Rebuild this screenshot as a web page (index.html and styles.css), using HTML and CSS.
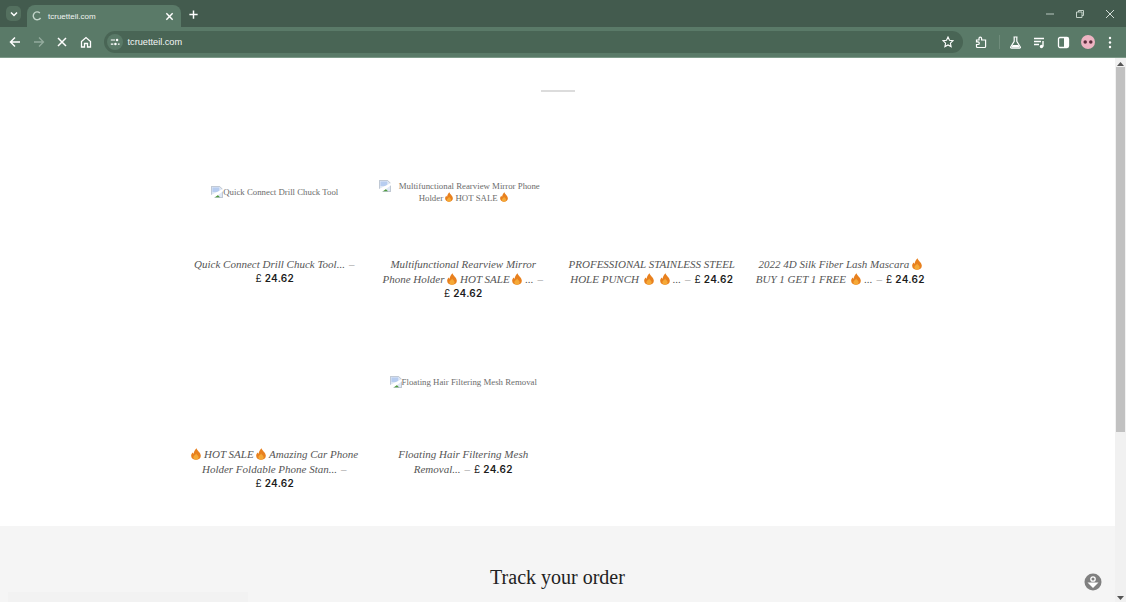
FILE: index.html
```html
<!DOCTYPE html>
<html lang="en">
<head>
<meta charset="utf-8">
<title>tcruetteil.com</title>
<link rel="stylesheet" href="styles.css">
</head>
<body>
<svg class="defs" width="0" height="0" aria-hidden="true">
  <defs>
    <symbol id="fire" viewBox="0 0 12 14">
      <path fill="#e8801e" d="M6.800 0C7 3 11.800 5 11.800 9.200 11.800 12.200 9.300 14 6 14 2.700 14 .2 12.200 .2 9.200 .2 7.500 1 6.200 2 5.200 2.300 6 2.600 6.500 3.200 6.800 3.200 4 5 1.500 6.800 0z"/>
      <path fill="#f5a937" d="M6.200 6.500C6.600 8 9.200 9 9.200 11 9.200 12.800 7.800 14 6 14S2.800 12.800 2.800 11C2.800 9.200 5.800 8.200 6.200 6.500z"/>
    </symbol>
    <symbol id="broken" viewBox="0 0 16 16">
      <path fill="#dfe8f5" stroke="#a9b4c2" d="M.5.5h11l4 4v11H.5z"/>
      <path fill="#b7cdf0" d="M2 2h9v6H2z"/>
      <path fill="#4f9a3c" d="M1 15l5-5 4 3 2 2z"/>
      <path fill="#fff" d="M0 12 16 4v3L4 16H0z"/>
    </symbol>
  </defs>
</svg>
<div class="window">
  <header class="chrome">
    <div class="tabstrip">
      <div class="tab-search">
        <svg width="10" height="10" viewBox="0 0 10 10"><path d="M2 3.500 5 6.500 8 3.500" fill="none" stroke="#fff" stroke-width="1.500"/></svg>
      </div>
      <div class="tab">
        <svg class="spinner" width="10" height="10" viewBox="0 0 14 14"><path d="M11 2.700A5.500 5.500 0 1 0 12 9.500" fill="none" stroke="#c4d6cb" stroke-width="2"/></svg>
        <span class="tab-title">tcruetteil.com</span>
        <svg width="9" height="9" viewBox="0 0 10 10"><path d="M1.500 1.500l7 7m0-7l-7 7" stroke="#fff" stroke-width="1.600"/></svg>
      </div>
      <svg class="newtab" width="11" height="11" viewBox="0 0 12 12"><path d="M6 1.500v9M1.500 6h9" stroke="#fff" stroke-width="1.600"/></svg>
      <div class="winctl">
        <svg width="10" height="10" viewBox="0 0 10 10"><path d="M1 5h8" stroke="#b9c8bf"/></svg>
        <svg width="10" height="10" viewBox="0 0 10 10"><path d="M1.500 3h5.500v5.500H1.500zM3.500 3V1.500H8.500V6.500H7" fill="none" stroke="#c4d2c9"/></svg>
        <svg width="10" height="10" viewBox="0 0 10 10"><path d="M1 1l8 8m0-8l-8 8" stroke="#d3ddd7"/></svg>
      </div>
    </div>
    <div class="toolbar">
      <div class="nav">
        <svg width="12" height="12" viewBox="0 0 12 12"><path d="M11 6H2M6 1.500 1.500 6 6 10.500" fill="none" stroke="#fff" stroke-width="1.500"/></svg>
        <svg width="12" height="12" viewBox="0 0 12 12"><path d="M1 6h9M6 1.500 10.500 6 6 10.500" fill="none" stroke="#93ab9d" stroke-width="1.300"/></svg>
        <svg width="12" height="12" viewBox="0 0 12 12"><path d="M2 2l8 8m0-8l-8 8" stroke="#fff" stroke-width="1.500"/></svg>
        <svg width="12" height="12" viewBox="0 0 12 12"><path d="M1.500 5.500 6 1.500l4.500 4v5.500H7.500V7.500h-3V11H1.500z" fill="none" stroke="#fff" stroke-width="1.300"/></svg>
      </div>
      <div class="omnibox">
        <span class="site-info">
          <svg width="10" height="10" viewBox="0 0 12 12"><path d="M1 3.500h5M1 8.500h3M9.500 8.500h2" stroke="#fff" stroke-width="1.300"/><circle cx="8.500" cy="3.500" r="1.500" fill="#fff"/><circle cx="6.500" cy="8.500" r="1.500" fill="#fff"/></svg>
        </span>
        <span class="url">tcruetteil.com</span>
        <svg class="star" width="12" height="12" viewBox="0 0 12 12"><path d="M6 1l1.500 3.300 3.500.4-2.600 2.400.7 3.500L6 8.900l-3.100 1.700.7-3.500L1 4.700l3.500-.4z" fill="none" stroke="#fff" stroke-width="1.100"/></svg>
      </div>
      <div class="tools">
        <svg class="ext" width="13" height="13" viewBox="0 0 13 13"><path d="M1.500 4h2.500V2.500a1.300 1.300 0 0 1 2.600 0V4h4v6.500a1 1 0 0 1-1 1H2.500a1 1 0 0 1-1-1V8.500H3a1.300 1.300 0 0 0 0-2.600H1.500z" fill="none" stroke="#fff" stroke-width="1.200"/></svg>
        <span class="sep"></span>
        <svg width="13" height="13" viewBox="0 0 13 13"><path d="M4.500 1h4M5.200 1v4.300L1.700 11a.8.800 0 0 0 .7 1.200h8.200a.8.800 0 0 0 .7-1.200L7.800 5.300V1" fill="none" stroke="#fff" stroke-width="1.200"/><path d="M3.500 9h6l1 2.500h-8z" fill="#fff"/></svg>
        <svg width="13" height="13" viewBox="0 0 13 13"><path d="M1 2.500h10M1 5.500h7M1 8.500h5" stroke="#fff" stroke-width="1.300"/><path d="M10 5v5.500" stroke="#fff" stroke-width="1.400"/><circle cx="8.500" cy="10.500" r="1.700" fill="#fff"/></svg>
        <svg width="13" height="13" viewBox="0 0 13 13"><rect x="1.500" y="1.500" width="10" height="10" rx="1.500" fill="none" stroke="#fff" stroke-width="1.300"/><path d="M7 2h4v9H7z" fill="#fff"/></svg>
        <svg class="avatar" width="14" height="14" viewBox="0 0 16 16"><circle cx="8" cy="8" r="8" fill="#eeb4c3"/><circle cx="4.800" cy="8" r="2" fill="#5b2b3b"/><circle cx="11.200" cy="8" r="2" fill="#5b2b3b"/></svg>
        <svg class="dots" width="4" height="13" viewBox="0 0 4 13"><circle cx="2" cy="2" r="1.200" fill="#fff"/><circle cx="2" cy="6.500" r="1.200" fill="#fff"/><circle cx="2" cy="11" r="1.200" fill="#fff"/></svg>
      </div>
    </div>
  </header>

  <div class="viewport">
    <main class="page">
      <section class="collection">
        <div class="rule"></div>
        <div class="grid">
          <article class="card">
            <div class="thumb"><span class="alt"><svg class="broken"><use href="#broken"/></svg>Quick Connect Drill Chuck Tool</span></div>
            <p class="info"><em class="name">Quick Connect Drill Chuck Tool...</em> <span class="dash">–</span> <span class="price"><span class="cur">£</span> 24.62</span></p>
          </article>
          <article class="card">
            <div class="thumb"><span class="alt"><svg class="broken gap"><use href="#broken"/></svg>Multifunctional Rearview Mirror Phone Holder <svg class="fire"><use href="#fire"/></svg> HOT SALE <svg class="fire"><use href="#fire"/></svg></span></div>
            <p class="info"><em class="name">Multifunctional Rearview Mirror Phone Holder <svg class="fire"><use href="#fire"/></svg> HOT SALE <svg class="fire"><use href="#fire"/></svg> ...</em> <span class="dash">–</span> <span class="price"><span class="cur">£</span> 24.62</span></p>
          </article>
          <article class="card">
            <div class="thumb"></div>
            <p class="info"><em class="name">PROFESSIONAL STAINLESS STEEL HOLE PUNCH &nbsp;<svg class="fire"><use href="#fire"/></svg> &nbsp;<svg class="fire"><use href="#fire"/></svg> ...</em> <span class="dash">–</span> <span class="price"><span class="cur">£</span> 24.62</span></p>
          </article>
          <article class="card">
            <div class="thumb"></div>
            <p class="info"><em class="name">2022 4D Silk Fiber Lash Mascara <svg class="fire"><use href="#fire"/></svg> BUY 1 GET 1 FREE &nbsp;<svg class="fire"><use href="#fire"/></svg> ...</em> <span class="dash">–</span> <span class="price"><span class="cur">£</span> 24.62</span></p>
          </article>
          <article class="card">
            <div class="thumb"></div>
            <p class="info"><em class="name"><svg class="fire"><use href="#fire"/></svg> HOT SALE <svg class="fire"><use href="#fire"/></svg> Amazing Car Phone Holder Foldable Phone Stan...</em> <span class="dash">–</span> <span class="price"><span class="cur">£</span> 24.62</span></p>
          </article>
          <article class="card">
            <div class="thumb"><span class="alt"><svg class="broken"><use href="#broken"/></svg>Floating Hair Filtering Mesh Removal</span></div>
            <p class="info"><em class="name">Floating Hair Filtering Mesh Removal...</em> <span class="dash">–</span> <span class="price"><span class="cur">£</span> 24.62</span></p>
          </article>
        </div>
      </section>
      <footer class="track">
        <h2 class="track-title">Track your order</h2>
      </footer>
      <div class="faint-bar"></div>
      <button class="widget" aria-label="Help">
        <svg width="18" height="18" viewBox="0 0 18 18"><circle cx="9" cy="9" r="8.500" fill="#808080"/><circle cx="9" cy="6" r="2.200" fill="none" stroke="#fff" stroke-width="1.300"/><path d="M3.500 9.500h11L9 15z" fill="#fff"/></svg>
      </button>
    </main>
    <div class="scrollbar">
      <svg class="arrow" width="7" height="4" viewBox="0 0 7 4"><path d="M3.500 0 7 4H0z" fill="#555"/></svg>
      <div class="track-bar"><div class="thumb-bar"></div></div>
      <svg class="arrow" width="7" height="4" viewBox="0 0 7 4"><path d="M0 0h7L3.500 4z" fill="#555"/></svg>
    </div>
  </div>
</div>
</body>
</html>
```

FILE: styles.css
```css
* { box-sizing: border-box; }
html, body { margin: 0; height: 100%; overflow: hidden; background: #fff; }
.defs { position: absolute; }
.window { display: flex; flex-direction: column; height: 602px; font-family: "Liberation Sans", Arial, sans-serif; }

.chrome { flex: none; height: 58px; background: #5a7a68; border-bottom: 1px solid #7d9a89; display: flex; flex-direction: column; }
.tabstrip { flex: none; height: 27px; background: #435b4e; display: flex; align-items: center; padding: 5px 0 0 6px; }
.tab-search { width: 15px; height: 15px; margin-top: -5px; background: #54705f; border-radius: 5px; display: flex; align-items: center; justify-content: center; }
.tab { width: 154px; height: 22px; margin-left: 6px; background: #5a7a68; border-radius: 8px 8px 0 0; display: flex; align-items: center; gap: 6px; padding: 0 7px 0 5px; align-self: flex-end; }
.tab-title { flex: 1; font-size: 8px; color: #f0f4f1; }
.newtab { margin: -3px 0 0 7px; }
.winctl { margin: -5px 0 0 auto; display: flex; gap: 20px; padding-right: 11px; align-items: center; }

.toolbar { flex: 1; display: flex; align-items: center; padding: 0 9px 0 9px; }
.nav { display: flex; gap: 11.500px; align-items: center; }
.omnibox { width: 859px; height: 22px; margin-left: 12px; background: #496555; border-radius: 11px; display: flex; align-items: center; padding: 0 9px 0 3px; }
.site-info { width: 16px; height: 16px; border-radius: 8px; background: #5a7a68; display: flex; align-items: center; justify-content: center; }
.url { flex: 1; margin-left: 5px; font-size: 9.200px; color: #f4f7f5; }
.tools { display: flex; align-items: center; margin-left: 12px; gap: 11px; }
.sep { width: 1px; height: 14px; background: #6f8c7b; margin: 0 -2px 0 0; }
.dots { margin-left: 2px; }

.viewport { flex: 1; min-height: 0; display: flex; }
.page { flex: 1; min-width: 0; position: relative; overflow: hidden; background: #fff; }
.collection { height: 468px; display: flex; flex-direction: column; align-items: center; padding-top: 32px; }
.rule { width: 34px; height: 2px; background: #dcdcdc; flex: none; }
.grid { margin-top: 34px; display: grid; grid-template-columns: repeat(4, 170px); column-gap: 18.500px; row-gap: 16px; }
.card { text-align: center; min-width: 0; }
.thumb { height: 131px; display: flex; align-items: center; justify-content: center; }
.alt { font-family: "Liberation Serif", "Times New Roman", serif; font-size: 8.800px; line-height: 12px; color: #6c6c6c; display: block; }
.broken { display: inline-block; width: 12px; height: 12px; vertical-align: -3px; }
.broken.gap { margin: 0 8px 0 -8px; }
.fire { display: inline-block; width: 8px; height: 10px; vertical-align: -1px; }
.name .fire { width: 10px; height: 12px; vertical-align: -2px; }
.info { margin: 0; font-size: 11px; line-height: 13px; color: #555; }
.name { font-family: "Liberation Serif", "Times New Roman", serif; font-style: italic; font-size: 11px; line-height: 15px; }
.dash { color: #999; margin: 0 1px; font-family: "Liberation Serif", serif; }
.price { font-family: Inter, "Liberation Sans", sans-serif; font-weight: 600; font-size: 10px; letter-spacing: .3px; color: #1c1c1c; white-space: nowrap; }
.cur { font-weight: 400; }

.track { background: #f5f5f5; height: 76px; padding-top: 39px; }
.track-title { margin: 0; text-align: center; font-family: "Liberation Serif", "Times New Roman", serif; font-weight: 400; font-size: 20px; line-height: 24px; color: #222; }
.faint-bar { position: absolute; left: 8px; bottom: 0; width: 240px; height: 10px; background: #f2f2f2; }
.widget { position: absolute; left: 1084px; top: 515px; width: 18px; height: 18px; padding: 0; border: 0; background: none; display: flex; }

.scrollbar { flex: none; width: 11px; background: #f1f1f1; display: flex; flex-direction: column; align-items: center; padding: 4px 0 2px; }
.track-bar { flex: 1; width: 100%; padding: 1px 1px 0; }
.thumb-bar { height: 365px; background: #c1c1c1; }
```
